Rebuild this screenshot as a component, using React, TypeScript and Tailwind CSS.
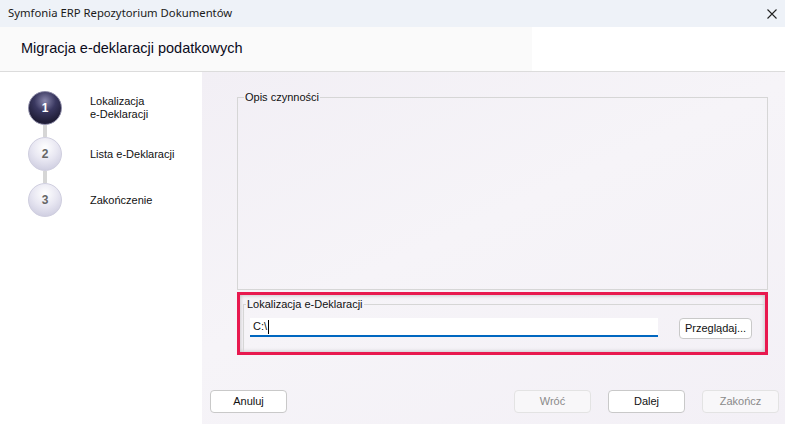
const steps = [
  { n: "1", label: ["Lokalizacja", "e-Deklaracji"], active: true },
  { n: "2", label: ["Lista e-Deklaracji"], active: false },
  { n: "3", label: ["Zakończenie"], active: false },
];

const StepCircle = ({ n, active }: { n: string; active: boolean }) => (
  <div
    className={
      active
        ? "w-[34px] h-[34px] rounded-full flex items-center justify-center border border-[#8c8aa6] bg-[radial-gradient(circle_at_50%_28%,#8a88ad_0%,#3a3860_38%,#1f1d36_75%,#2a2845_100%)] text-white text-[12px] font-bold"
        : "w-[34px] h-[34px] rounded-full flex items-center justify-center border border-[#cfcedf] bg-[radial-gradient(circle_at_50%_30%,#ffffff_0%,#e8e7f2_45%,#cecde0_85%,#d8d7e6_100%)] text-[#666] text-[12px] font-bold"
    }
  >
    {n}
  </div>
);

const Btn = ({
  children,
  disabled,
}: {
  children: string;
  disabled?: boolean;
}) => (
  <button
    className={
      disabled
        ? "w-[77px] h-[23px] rounded-[4px] border border-[#e3e3e3] bg-[#f8f7f9] text-[#8a8a8a] text-[11px]"
        : "w-[77px] h-[23px] rounded-[4px] border border-[#c9c9c9] bg-white text-[#111] text-[11px]"
    }
  >
    {children}
  </button>
);

export default function App() {
  return (
    <div
      className="w-[785px] h-[424px] flex flex-col overflow-hidden bg-white"
      style={{ fontFamily: '"Liberation Sans", Arial, sans-serif' }}
    >
      {/* title bar */}
      <div className="h-[27px] shrink-0 bg-[#eef2f8] flex items-center justify-between pl-[8px] pr-[8px]">
        <span
          className="text-[11.3px] text-[#1a1a1a]"
          style={{ fontFamily: '"Noto Sans", "Open Sans", sans-serif' }}
        >
          Symfonia ERP Repozytorium Dokumentów
        </span>
        <svg width="10" height="10" viewBox="0 0 10 10">
          <path d="M0.5 0.5 L9.5 9.5 M9.5 0.5 L0.5 9.5" stroke="#222" strokeWidth="1.1" />
        </svg>
      </div>

      {/* header */}
      <div className="h-[45px] shrink-0 flex border-b border-[#dcdcdc]">
        <div className="w-[532px] bg-[#fafafa] flex items-center pl-[21px]">
          <span className="text-[14.5px] text-[#0a0a1a]">Migracja e-deklaracji podatkowych</span>
        </div>
        <div className="flex-1 bg-white" />
      </div>

      {/* body */}
      <div className="flex-1 flex min-h-0">
        <div className="w-[202px] shrink-0 bg-white pt-[19px] pl-[28px] flex flex-col">
          {steps.map((s, i) => (
            <div key={s.n} className="flex flex-col">
              <div className="flex items-center">
                <StepCircle n={s.n} active={s.active} />
                <div className="ml-[28px] text-[11px] leading-[13px] text-[#111]">
                  {s.label.map((l) => (
                    <div key={l}>{l}</div>
                  ))}
                </div>
              </div>
              {i < steps.length - 1 && (
                <div className="w-[4px] h-[12px] bg-[#d6d6d6] ml-[15px]" />
              )}
            </div>
          ))}
        </div>

        <div className="flex-1 min-w-0 flex flex-col bg-[linear-gradient(155deg,#f2eff5_0%,#f6f4f8_45%,#f3f0f6_100%)] pt-[18px]">
          <div className="pl-[35px] pr-[17px] flex flex-col">
            <fieldset className="h-[200px] min-w-0 border border-[#d6d6d6]">
              <legend className="ml-[6px] px-[1px] text-[11px] leading-[14px] text-[#111]">
                Opis czynności
              </legend>
            </fieldset>

            <div className="mt-[2px] h-[63px] border-[3px] border-[#e8194f] overflow-hidden shadow-[inset_0_0_4px_rgba(0,0,0,0.25)]">
              <fieldset className="ml-[3px] mt-[2px] h-[70px] min-w-0 border-t border-l border-[#d6d6d6]">
                <legend className="ml-[2px] px-[1px] text-[11px] leading-[14px] text-[#111]">
                  Lokalizacja e-Deklaracji
                </legend>
                <div className="flex items-start mt-[7px] ml-[6px]">
                  <div className="w-[408px] h-[19px] shrink-0 bg-white border-b-2 border-[#0067c0] flex items-center pl-[3px] text-[11px] text-[#111]">
                    C:\
                    <span className="inline-block w-[1px] h-[14px] bg-black ml-[1px]" />
                  </div>
                  <button className="ml-[21px] w-[73px] h-[21px] shrink-0 rounded-[4px] border border-[#c9c9c9] bg-white text-[11px] text-[#111]">
                    Przeglądaj...
                  </button>
                </div>
              </fieldset>
            </div>
          </div>

          <div className="mt-[35px] flex pl-[8px] pr-[6px]">
            <Btn>Anuluj</Btn>
            <div className="flex-1" />
            <div className="flex gap-[17px]">
              <Btn disabled>Wróć</Btn>
              <Btn>Dalej</Btn>
              <Btn disabled>Zakończ</Btn>
            </div>
          </div>
        </div>
      </div>
    </div>
  );
}
